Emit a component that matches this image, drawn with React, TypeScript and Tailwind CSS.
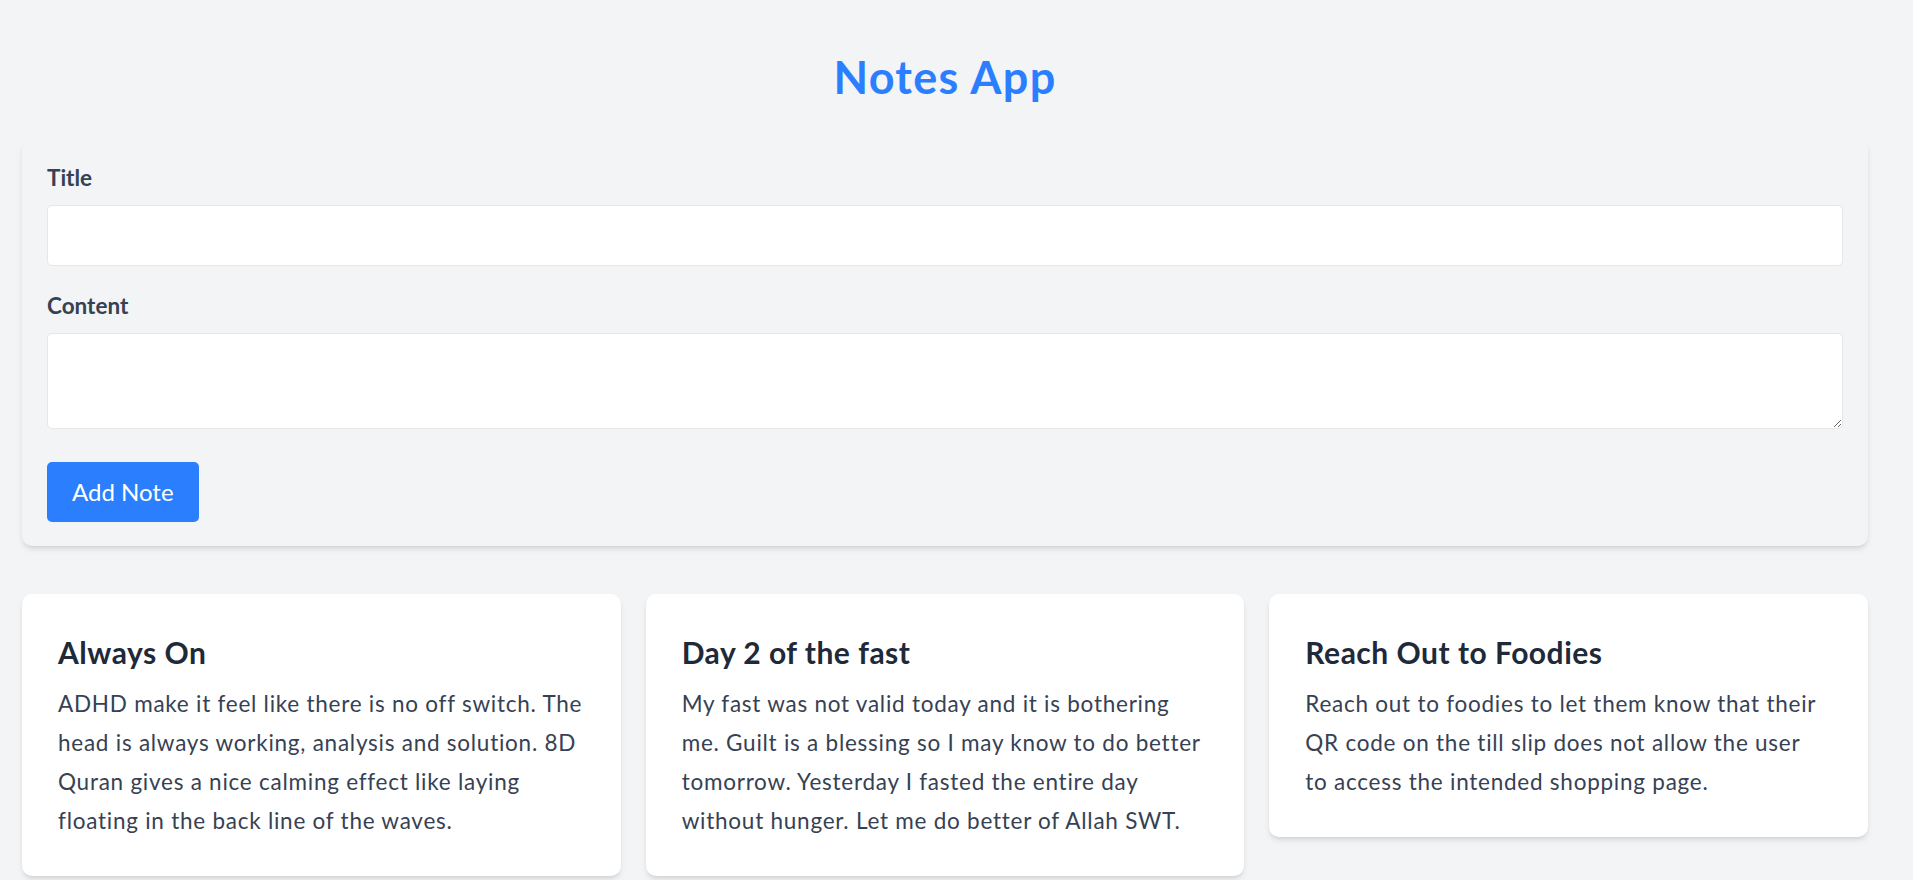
import { useState } from 'react'

type Note = { id: number; title: string; content: string }

const initialNotes: Note[] = [
  {
    id: 1,
    title: 'Always On',
    content:
      'ADHD make it feel like there is no off switch. The head is always working, analysis and solution. 8D Quran gives a nice calming effect like laying floating in the back line of the waves.',
  },
  {
    id: 2,
    title: 'Day 2 of the fast',
    content:
      'My fast was not valid today and it is bothering me. Guilt is a blessing so I may know to do better tomorrow. Yesterday I fasted the entire day without hunger. Let me do better of Allah SWT.',
  },
  {
    id: 3,
    title: 'Reach Out to Foodies',
    content:
      'Reach out to foodies to let them know that their QR code on the till slip does not allow the user to\u00a0access the intended shopping page.',
  },
]

export default function App() {
  const [notes, setNotes] = useState<Note[]>(initialNotes)
  const [title, setTitle] = useState('')
  const [content, setContent] = useState('')

  const addNote = (e: React.FormEvent) => {
    e.preventDefault()
    if (!title.trim()) return
    setNotes([...notes, { id: Date.now(), title, content }])
    setTitle('')
    setContent('')
  }

  return (
    <div className="min-h-screen bg-gray-100 pt-[52px] pb-[64px] font-['Lato','Liberation_Sans',sans-serif]">
      <div className="ml-[22px] w-[1846px]">
        <h1 className="text-center text-[45px] leading-[50px] font-bold tracking-[1.3px] text-blue-500 mb-[38px]">
          Notes App
        </h1>

        <form
          onSubmit={addNote}
          className="bg-gray-100 rounded-[10px] shadow-md px-[25px] pt-[20px] pb-[24px] mb-[48px]"
        >
          <label className="block text-[22.5px] leading-[35px] font-bold text-gray-700 mb-[10px]">
            Title
          </label>
          <input
            type="text"
            value={title}
            onChange={(e) => setTitle(e.target.value)}
            className="block w-full h-[61px] px-4 bg-white border border-gray-200 rounded-[5px] text-[20px] text-gray-700 outline-none"
          />

          <label className="block text-[22.5px] leading-[35px] font-bold text-gray-700 mt-[22px] mb-[10px]">
            Content
          </label>
          <textarea
            value={content}
            onChange={(e) => setContent(e.target.value)}
            className="block w-full h-[96px] px-4 py-3 bg-white border border-gray-200 rounded-[5px] text-[20px] text-gray-700 outline-none"
          />

          <button
            type="submit"
            className="mt-[33px] h-[60px] px-[25px] bg-blue-500 text-white text-[24px] rounded-[5px]"
          >
            Add Note
          </button>
        </form>

        <div className="grid grid-cols-3 gap-[25px] items-start">
          {notes.map((note) => (
            <div key={note.id} className="bg-white rounded-[10px] shadow-md px-[36px] pt-[38px] pb-[36px]">
              <h2 className="text-[30px] leading-[40px] font-bold tracking-[0.5px] text-gray-800 mb-[12px]">
                {note.title}
              </h2>
              <p className="text-[22.5px] leading-[39px] tracking-[0.75px] text-gray-700">
                {note.content}
              </p>
            </div>
          ))}
        </div>
      </div>
    </div>
  )
}
